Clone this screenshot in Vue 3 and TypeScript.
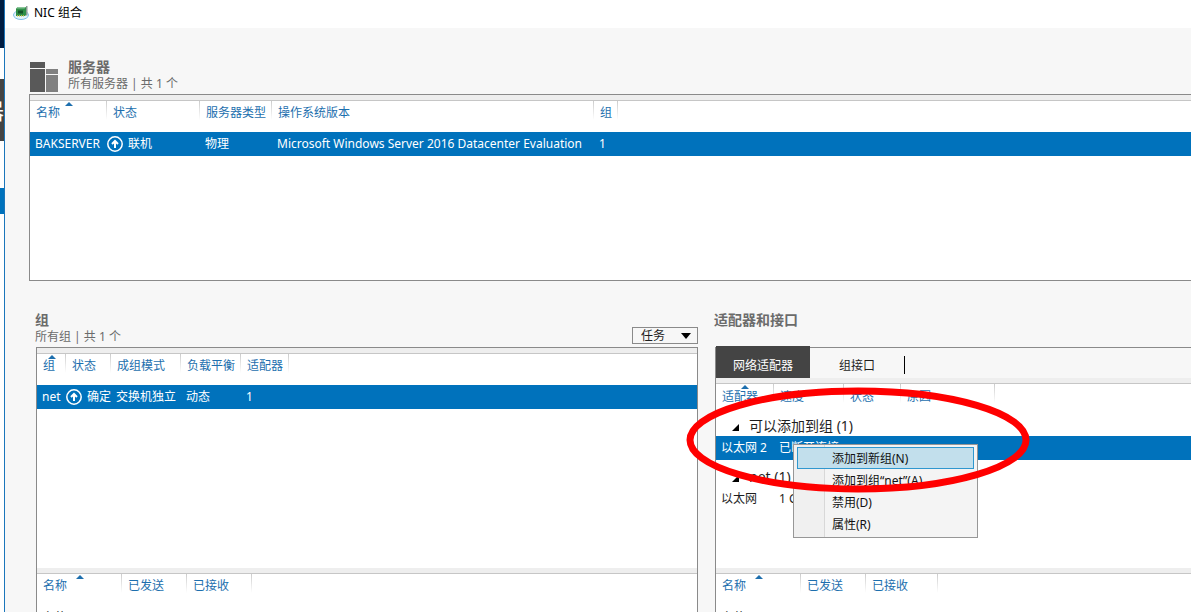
<script setup lang="ts">
import { ref } from 'vue'

interface Column {
  label: string
  width: number
  sorted?: boolean
}

const serverColumns: Column[] = [
  { label: '名称', width: 77, sorted: true },
  { label: '状态', width: 93 },
  { label: '服务器类型', width: 72 },
  { label: '操作系统版本', width: 322 },
  { label: '组', width: 24 },
]

const teamColumns: Column[] = [
  { label: '组', width: 29, sorted: true },
  { label: '状态', width: 45 },
  { label: '成组模式', width: 70 },
  { label: '负载平衡', width: 60 },
  { label: '适配器', width: 48 },
]

const adapterColumns: Column[] = [
  { label: '适配器', width: 58, sorted: true },
  { label: '速度', width: 70 },
  { label: '状态', width: 57 },
  { label: '原因', width: 94 },
]

const teamTraffic: Column[] = [
  { label: '名称', width: 85, sorted: true },
  { label: '已发送', width: 65 },
  { label: '已接收', width: 65 },
]

const adapterTraffic: Column[] = [
  { label: '名称', width: 85, sorted: true },
  { label: '已发送', width: 65 },
  { label: '已接收', width: 72 },
]

const menuItems: string[] = ['添加到新组(N)', '添加到组“net”(A)', '禁用(D)', '属性(R)']
const activeTab = ref<'adapters' | 'interfaces'>('adapters')
const task = ref('任务')
</script>

<template>
  <div class="screen">
    <aside class="behind">
      <div class="behind-banner"></div>
      <div class="behind-tab"><span>器</span></div>
      <div class="behind-selection"></div>
    </aside>

    <main class="window">
      <header class="titlebar">
        <svg class="app-icon" viewBox="0 0 16 16" aria-hidden="true">
          <ellipse cx="8" cy="10" rx="7.500" ry="4.500" fill="#e4f4fd" stroke="#7fbfe8" />
          <path d="M3 3.500 5 2h8v8l-1 1H3z" fill="#2f8f48" />
          <path d="M3 3.500 5 2h8l-1.500 1.500z" fill="#8cc79a" />
          <path d="M13 1h1.500v9.500H13z" fill="#8b9a94" />
          <path d="M5 5.500h5v3H5z" fill="#12532a" />
          <path d="M4.500 10v1.500M6.500 10v1.500M8.500 10v1.500M10.500 10v1.500" stroke="#c3bd45" />
        </svg>
        <h1>NIC 组合</h1>
      </header>

      <div class="content">
        <section class="servers">
          <div class="server-heading">
            <svg class="server-icon" viewBox="0 0 28 30" aria-hidden="true">
              <path d="M0 0h15v6H0zM0 7h15v23H0z" fill="#595959" />
              <path d="M16 7h12v5H16zM16 13h12v17H16z" fill="#808080" />
            </svg>
            <div>
              <h2>服务器</h2>
              <p>所有服务器 | 共 1 个</p>
            </div>
          </div>
          <div class="panel server-panel">
            <table>
              <colgroup>
                <col v-for="c in serverColumns" :key="c.label" :style="{ width: c.width + 'px' }" />
                <col />
              </colgroup>
              <thead>
                <tr>
                  <th v-for="c in serverColumns" :key="c.label" :class="{ sorted: c.sorted }">{{ c.label }}</th>
                  <td></td>
                </tr>
              </thead>
              <tbody>
                <tr class="selected">
                  <td>BAKSERVER</td>
                  <td class="status">
                    <span>
                      <svg class="up" viewBox="0 0 16 16" aria-hidden="true">
                        <circle cx="8" cy="8" r="7.200" />
                        <path d="M8 12V5M5 8l3-3 3 3" />
                      </svg>联机
                    </span>
                  </td>
                  <td>物理</td>
                  <td>Microsoft Windows Server 2016 Datacenter Evaluation</td>
                  <td>1</td>
                  <td></td>
                </tr>
              </tbody>
            </table>
          </div>
        </section>

        <div class="lower">
          <section class="teams">
            <div class="team-heading">
              <div>
                <h2>组</h2>
                <p>所有组 | 共 1 个</p>
              </div>
              <label class="tasks">
                <select v-model="task" aria-label="任务">
                  <option>任务</option>
                </select>
                <svg viewBox="0 0 10 6" aria-hidden="true"><path d="M0 0h10L5 6z" /></svg>
              </label>
            </div>
            <div class="panel stack">
              <div class="upper">
                <table>
                  <colgroup>
                    <col v-for="c in teamColumns" :key="c.label" :style="{ width: c.width + 'px' }" />
                    <col />
                  </colgroup>
                  <thead>
                    <tr>
                      <th v-for="c in teamColumns" :key="c.label" :class="{ sorted: c.sorted }">{{ c.label }}</th>
                      <td></td>
                    </tr>
                  </thead>
                  <tbody>
                    <tr class="selected">
                      <td>net</td>
                      <td class="status">
                        <span>
                          <svg class="up" viewBox="0 0 16 16" aria-hidden="true">
                            <circle cx="8" cy="8" r="7.200" />
                            <path d="M8 12V5M5 8l3-3 3 3" />
                          </svg>确定
                        </span>
                      </td>
                      <td>交换机独立</td>
                      <td>动态</td>
                      <td>1</td>
                      <td></td>
                    </tr>
                  </tbody>
                </table>
              </div>
              <table class="traffic">
                <colgroup>
                  <col v-for="c in teamTraffic" :key="c.label" :style="{ width: c.width + 'px' }" />
                  <col />
                </colgroup>
                <thead>
                  <tr>
                    <th v-for="c in teamTraffic" :key="c.label" :class="{ sorted: c.sorted }">{{ c.label }}</th>
                    <td></td>
                  </tr>
                </thead>
                <tbody>
                  <tr><td colspan="4">字节</td></tr>
                </tbody>
              </table>
            </div>
          </section>

          <section class="adapters">
            <h2>适配器和接口</h2>
            <div class="panel stack adapter-panel">
              <div class="upper">
                <nav class="tabs" role="tablist">
                  <button
                    role="tab"
                    :class="{ active: activeTab === 'adapters' }"
                    :aria-selected="activeTab === 'adapters'"
                    @click="activeTab = 'adapters'"
                  >网络适配器</button>
                  <button
                    role="tab"
                    :class="{ active: activeTab === 'interfaces' }"
                    :aria-selected="activeTab === 'interfaces'"
                    @click="activeTab = 'interfaces'"
                  >组接口</button>
                  <span class="tab-divider"></span>
                </nav>
                <table class="adapter-table">
                  <colgroup>
                    <col v-for="c in adapterColumns" :key="c.label" :style="{ width: c.width + 'px' }" />
                    <col />
                  </colgroup>
                  <thead>
                    <tr>
                      <th v-for="c in adapterColumns" :key="c.label" :class="{ sorted: c.sorted }">{{ c.label }}</th>
                      <td></td>
                    </tr>
                  </thead>
                  <tbody>
                    <tr class="group">
                      <td colspan="5">
                        <svg viewBox="0 0 7 7" aria-hidden="true"><path d="M7 0v7H0z" /></svg>可以添加到组 (1)
                      </td>
                    </tr>
                    <tr class="selected">
                      <td>以太网 2</td>
                      <td colspan="4">已断开连接</td>
                    </tr>
                    <tr class="group second">
                      <td colspan="5">
                        <svg viewBox="0 0 7 7" aria-hidden="true"><path d="M7 0v7H0z" /></svg>net (1)
                      </td>
                    </tr>
                    <tr>
                      <td>以太网</td>
                      <td colspan="4">1 Gbps</td>
                    </tr>
                  </tbody>
                </table>
              </div>
              <table class="traffic">
                <colgroup>
                  <col v-for="c in adapterTraffic" :key="c.label" :style="{ width: c.width + 'px' }" />
                  <col />
                </colgroup>
                <thead>
                  <tr>
                    <th v-for="c in adapterTraffic" :key="c.label" :class="{ sorted: c.sorted }">{{ c.label }}</th>
                    <td></td>
                  </tr>
                </thead>
                <tbody>
                  <tr><td colspan="4">字节</td></tr>
                </tbody>
              </table>

              <div class="menu" role="menu">
                <button
                  v-for="(item, i) in menuItems"
                  :key="item"
                  role="menuitem"
                  :class="{ hot: i === 0 }"
                >{{ item }}</button>
              </div>
              <svg class="marker" viewBox="0 0 344 106" aria-hidden="true">
                <ellipse cx="172" cy="53" rx="168" ry="49" />
              </svg>
            </div>
          </section>
        </div>
      </div>
    </main>
  </div>
</template>

<style>
html,
body {
  margin: 0;
  overflow: hidden;
}
</style>

<style scoped>
.screen {
  display: flex;
  height: 100vh;
  overflow: hidden;
  background: #fff;
  color: #1e1e1e;
  font: 12px/16px "Noto Sans", "Noto Sans CJK SC", sans-serif;
}

h1,
h2,
p {
  margin: 0;
  font-weight: 400;
}

button,
select {
  margin: 0;
  padding: 0;
  border: 0;
  border-radius: 0;
  background: none;
  color: inherit;
  font: inherit;
}

.behind {
  flex: none;
  width: 4px;
  overflow: hidden;
}

.behind-banner {
  height: 48px;
  background: #001d42;
}

.behind-tab {
  display: flex;
  justify-content: flex-end;
  align-items: center;
  height: 62px;
  margin-top: 31px;
  background: #444;
  color: #fff;
  font-size: 22px;
}

.behind-selection {
  height: 26px;
  margin-top: 47px;
  background: #0072bc;
}

.window {
  flex: 1;
  min-width: 0;
  display: flex;
  flex-direction: column;
  border-left: 1px solid #1b76bb;
  background: #f7f7f7;
}

.titlebar {
  display: flex;
  align-items: center;
  gap: 5px;
  flex: none;
  height: 26px;
  padding: 0 8px 2px;
  background: #fff;
  color: #000;
}

.titlebar h1 {
  font-size: 12px;
}

.app-icon {
  width: 16px;
  height: 16px;
}

.content {
  flex: 1;
  min-height: 0;
  display: flex;
  flex-direction: column;
  padding: 30px 0 0 24px;
}

h2 {
  color: #6b6b6b;
  font-size: 14px;
  font-weight: 700;
  line-height: 18px;
}

p {
  color: #6b6b6b;
}

.server-heading {
  display: flex;
  align-items: flex-start;
  gap: 10px;
  height: 36px;
  padding-left: 1px;
}

.server-icon {
  width: 28px;
  height: 30px;
  margin-top: 4px;
}

.panel {
  border: 1px solid #8a8a8a;
  background: #fff;
}

.server-panel {
  box-sizing: border-box;
  height: 187px;
  border-right: 0;
}

table {
  width: 100%;
  table-layout: fixed;
  border-collapse: separate;
  border-spacing: 0;
  border-top: 5px solid #eee;
}

th,
td {
  padding: 0 0 0 5px;
  text-align: left;
  font-weight: 400;
  white-space: nowrap;
}

thead th,
thead td {
  height: 32px;
  box-sizing: border-box;
  padding: 0 0 7px 6px;
  border-top: 1px solid #c6c6c6;
}

thead th {
  position: relative;
  color: #1d6fae;
  background: linear-gradient(#ccc, #fff) right top / 1px 19px no-repeat;
}

th.sorted::before {
  content: "";
  position: absolute;
  top: 1px;
  left: calc(50% - 4px);
  border: 4px solid transparent;
  border-top: 0;
  border-bottom-color: #1d6fae;
}

tbody td {
  height: 24px;
}

.traffic tbody td {
  height: 26px;
}

.selected td {
  background: #0072bc;
  color: #fff;
}

.status {
  padding-left: 0;
}

.status span {
  display: flex;
  align-items: center;
  gap: 5px;
}

.up {
  width: 16px;
  height: 16px;
  fill: none;
  stroke: #fff;
  stroke-width: 2;
}

.up circle {
  stroke-width: 1.500;
}

.lower {
  flex: 1;
  min-height: 0;
  display: grid;
  grid-template-columns: 662fr 476fr;
  gap: 17px;
  padding: 30px 0 0 7px;
}

.teams,
.adapters {
  min-width: 0;
  display: flex;
  flex-direction: column;
}

.team-heading {
  display: flex;
  justify-content: space-between;
  align-items: flex-end;
  height: 36px;
}

.team-heading > div {
  align-self: flex-start;
  margin-left: -1px;
}

.tasks {
  position: relative;
  display: block;
  margin-bottom: 3px;
}

.tasks select {
  display: block;
  width: 66px;
  height: 17px;
  padding-left: 8px;
  border: 1px solid #8a8a8a;
  appearance: none;
  line-height: 15px;
}

.tasks svg {
  position: absolute;
  top: 6px;
  right: 7px;
  width: 10px;
  height: 6px;
}

.stack {
  position: relative;
  flex: 1;
  border-bottom: 0;
}

.upper {
  height: 220px;
}

.adapters h2 {
  height: 36px;
  margin-left: -1px;
}

.adapter-panel {
  border-right: 0;
}

.tabs {
  display: flex;
  align-items: center;
  height: 30px;
  background: #f7f7f7;
}

.tabs button {
  width: 94px;
  height: 32px;
  margin-top: -2px;
  padding-top: 7px;
}

.tabs .active {
  background: #444;
  color: #fff;
}

.tab-divider {
  width: 1px;
  height: 18px;
  margin-top: 4px;
  background: #000;
}

.adapter-table thead th,
.adapter-table thead td {
  height: 33px;
}

.group td {
  height: 20px;
  padding-left: 16px;
  font-size: 14px;
  line-height: 20px;
}

.group.second td {
  box-sizing: border-box;
  height: 27px;
  padding-top: 6px;
}

.group svg {
  width: 7px;
  height: 7px;
  margin-right: 10px;
}

.menu {
  position: absolute;
  top: 96px;
  left: 77px;
  box-sizing: border-box;
  display: flex;
  flex-direction: column;
  width: 185px;
  padding: 2px 3px;
  border: 1px solid #979797;
  background: linear-gradient(90deg, #f0f0f0 30px, #d8d8d8 30px, #d8d8d8 31px, #f4f4f4 31px);
}

.menu button {
  box-sizing: border-box;
  height: 22px;
  padding: 2px 0 0 34px;
  border: 1px solid transparent;
  color: #111;
  text-align: left;
}

.menu .hot {
  border-color: #2f97cf;
  background: #c2dfec;
}

.marker {
  position: absolute;
  top: 39px;
  left: -30px;
  width: 344px;
  height: 106px;
  fill: none;
  stroke: #f00;
  stroke-width: 7;
  pointer-events: none;
}
</style>
